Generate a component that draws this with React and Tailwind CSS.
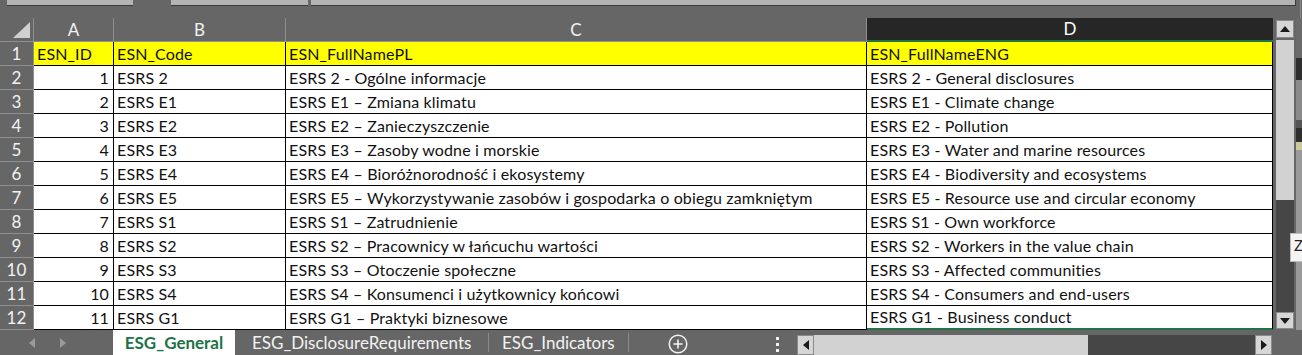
import React from "react";

const rows = [
  [1, "ESRS 2", "ESRS 2 - Ogólne informacje", "ESRS 2 - General disclosures"],
  [2, "ESRS E1", "ESRS E1 – Zmiana klimatu", "ESRS E1 - Climate change"],
  [3, "ESRS E2", "ESRS E2 – Zanieczyszczenie", "ESRS E2 - Pollution"],
  [4, "ESRS E3", "ESRS E3 – Zasoby wodne i morskie", "ESRS E3 - Water and marine resources"],
  [5, "ESRS E4", "ESRS E4 – Bioróżnorodność i ekosystemy", "ESRS E4 - Biodiversity and ecosystems"],
  [6, "ESRS E5", "ESRS E5 – Wykorzystywanie zasobów i gospodarka o obiegu zamkniętym", "ESRS E5 - Resource use and circular economy"],
  [7, "ESRS S1", "ESRS S1 – Zatrudnienie", "ESRS S1 - Own workforce"],
  [8, "ESRS S2", "ESRS S2 – Pracownicy w łańcuchu wartości", "ESRS S2 - Workers in the value chain"],
  [9, "ESRS S3", "ESRS S3 – Otoczenie społeczne", "ESRS S3 - Affected communities"],
  [10, "ESRS S4", "ESRS S4 – Konsumenci i użytkownicy końcowi", "ESRS S4 - Consumers and end-users"],
  [11, "ESRS G1", "ESRS G1 – Praktyki biznesowe", "ESRS G1 - Business conduct"],
];

const font = { fontFamily: "Lato, 'Liberation Sans', sans-serif" };

function Tri({ dir, className }) {
  const pts = {
    up: "0,6 5,0 10,6",
    down: "0,0 5,6 10,0",
    left: "6,0 0,5 6,10",
    right: "0,0 6,5 0,10",
  }[dir];
  const vb = dir === "up" || dir === "down" ? "0 0 10 6" : "0 0 6 10";
  const w = dir === "up" || dir === "down" ? 10 : 6;
  const h = dir === "up" || dir === "down" ? 6 : 10;
  return (
    <svg width={w} height={h} viewBox={vb} className={className}>
      <polygon points={pts} fill="currentColor" />
    </svg>
  );
}

function RowHead({ n }) {
  return (
    <div className="w-[34px] shrink-0 h-full flex items-center justify-center border-r border-b border-[#8f8f8f] bg-[#666] text-[#f2f2f2] text-[17px]">
      {n}
    </div>
  );
}

function DataRow({ n, cells, yellow, last }) {
  const bg = yellow ? "bg-[#ffff00]" : "bg-white";
  return (
    <div className="flex h-[24px] text-[16px] tracking-[0.15px] text-[#111]">
      <RowHead n={n} />
      <div className={`w-[80px] shrink-0 border-r border-b border-black ${bg} flex items-center ${yellow ? "justify-start pl-[3px]" : "justify-end pr-[4px]"}`}>
        {cells[0]}
      </div>
      <div className={`w-[172px] shrink-0 border-r border-b border-black ${bg} flex items-center pl-[3px] whitespace-nowrap`}>
        {cells[1]}
      </div>
      <div className={`w-[581px] shrink-0 border-r border-b border-black ${bg} flex items-center pl-[3px] whitespace-nowrap overflow-hidden`}>
        {cells[2]}
      </div>
      <div className={`w-[406px] shrink-0 border-r border-black ${last ? "border-b-2 border-b-[#217346]" : "border-b"} ${bg} flex items-center pl-[3px] whitespace-nowrap overflow-hidden`}>
        {cells[3]}
      </div>
    </div>
  );
}

export default function App() {
  return (
    <div className="w-[1302px] h-[355px] bg-[#666] flex flex-col overflow-hidden relative" style={font}>
      {/* top strip */}
      <div className="h-[18px] flex items-start shrink-0">
        <div className="ml-[7px] w-[126px] h-[6px] bg-[#b3b3b3] border-b border-[#3a3a3a]" />
        <div className="ml-[38px] w-[137px] h-[6px] bg-[#b3b3b3] border-b border-[#3a3a3a]" />
        <div className="ml-[3px] w-[985px] h-[6px] bg-[#b3b3b3] border-b border-r border-[#3a3a3a]" />
        <div className="ml-[4px] w-[1px] h-[18px] bg-[#8a8a8a]" />
      </div>

      {/* main */}
      <div className="flex h-[312px] shrink-0">
        <div className="w-[1273px] shrink-0 flex flex-col">
          {/* column header */}
          <div className="flex h-[24px] text-[17px] text-[#f2f2f2]">
            <div className="w-[34px] shrink-0 border-r border-b border-[#8f8f8f] flex items-end justify-end pr-[3px] pb-[3px]">
              <svg width="17" height="16" viewBox="0 0 17 16">
                <polygon points="17,0 17,16 0,16" fill="#d0d0d0" />
              </svg>
            </div>
            <div className="w-[80px] shrink-0 border-r border-b border-[#8f8f8f] flex items-center justify-center">A</div>
            <div className="w-[172px] shrink-0 border-r border-b border-[#8f8f8f] flex items-center justify-center">B</div>
            <div className="w-[581px] shrink-0 border-r border-b border-[#8f8f8f] flex items-center justify-center">C</div>
            <div className="w-[406px] shrink-0 bg-[#262626] border-b-2 border-[#217346] flex items-center justify-center text-white">D</div>
          </div>
          <DataRow n={1} yellow cells={["ESN_ID", "ESN_Code", "ESN_FullNamePL", "ESN_FullNameENG"]} />
          {rows.map((r, i) => (
            <DataRow key={i} n={i + 2} last={i === rows.length - 1} cells={[r[0], r[1], r[2], r[3]]} />
          ))}
        </div>

        {/* vertical scrollbar */}
        <div className="ml-[3px] w-[18px] shrink-0 flex flex-col pt-[2px]">
          <div className="h-[18px] bg-[#d6d6d6] border border-[#8a8a8a] flex items-center justify-center text-[#1a1a1a]">
            <Tri dir="up" />
          </div>
          <div className="h-[2px]" />
          <div className="h-[160px] bg-[#d2d2d2]" />
          <div className="h-[112px] bg-[#464646]" />
          <div className="h-[17px] bg-[#d6d6d6] border border-[#8a8a8a] flex items-center justify-center text-[#1a1a1a]">
            <Tri dir="down" />
          </div>
        </div>

        {/* right edge strip */}
        <div className="ml-[2px] w-[6px] shrink-0 flex flex-col bg-[#5e5e5e]">
          <div className="h-[40px] bg-[#6a6a6a]" />
          <div className="h-[22px] bg-[#2e2e2e]" />
          <div className="h-[40px] bg-[#8a8a8a]" />
          <div className="h-[8px] bg-[#555]" />
          <div className="h-[14px] bg-[#2e2e2e]" />
          <div className="h-[8px] bg-[#c9c9a0]" />
          <div className="flex-1 bg-[#9a9a9a]" />
        </div>
      </div>

      {/* tooltip fragment on right edge */}
      <div className="absolute left-[1290px] top-[233px] w-[14px] h-[29px] bg-[#f4f4f4] border border-[#bdbdbd] text-[15px] text-[#222] pl-[3px] pt-[4px] leading-none">
        Z
      </div>

      {/* tab bar */}
      <div className="h-[25px] shrink-0 flex items-stretch text-[17px] text-[#f2f2f2] relative">
        <div className="w-[113px] shrink-0 flex items-center text-[#9a9a9a]">
          <div className="ml-[29px]">
            <Tri dir="left" />
          </div>
          <div className="ml-[25px]">
            <Tri dir="right" />
          </div>
        </div>
        <div className="w-[122px] shrink-0 bg-white flex items-center justify-center font-bold text-[#217346] text-[17px]">
          ESG_General
        </div>
        <div className="w-[254px] shrink-0 flex items-center pl-[17px] border-r border-[#8a8a8a] my-[3px]">
          ESG_DisclosureRequirements
        </div>
        <div className="w-[140px] shrink-0 flex items-center pl-[13px] border-r border-[#8a8a8a] my-[3px]">
          ESG_Indicators
        </div>
        <div className="w-[138px] shrink-0 flex items-center">
          <svg width="20" height="20" viewBox="0 0 20 20" className="ml-[39px] mt-[2px]">
            <circle cx="10" cy="10" r="8.8" fill="none" stroke="#f2f2f2" strokeWidth="1.5" />
            <line x1="10" y1="5.5" x2="10" y2="14.5" stroke="#f2f2f2" strokeWidth="1.6" />
            <line x1="5.5" y1="10" x2="14.5" y2="10" stroke="#f2f2f2" strokeWidth="1.6" />
          </svg>
        </div>
        <div className="w-[20px] shrink-0 flex flex-col items-center justify-center gap-[3px] pt-[3px]">
          <div className="w-[3px] h-[3px] bg-[#f2f2f2]" />
          <div className="w-[3px] h-[3px] bg-[#f2f2f2]" />
          <div className="w-[3px] h-[3px] bg-[#f2f2f2]" />
        </div>
        {/* horizontal scrollbar */}
        <div className="ml-[10px] flex h-[20px] self-end">
          <div className="w-[17px] bg-[#d6d6d6] border border-[#8a8a8a] flex items-center justify-center text-[#1a1a1a]">
            <Tri dir="left" />
          </div>
          <div className="w-[274px] bg-[#d2d2d2]" />
          <div className="w-[167px] bg-[#464646]" />
          <div className="w-[17px] bg-[#d6d6d6] border border-[#8a8a8a] flex items-center justify-center text-[#1a1a1a]">
            <Tri dir="right" />
          </div>
        </div>
      </div>
    </div>
  );
}
